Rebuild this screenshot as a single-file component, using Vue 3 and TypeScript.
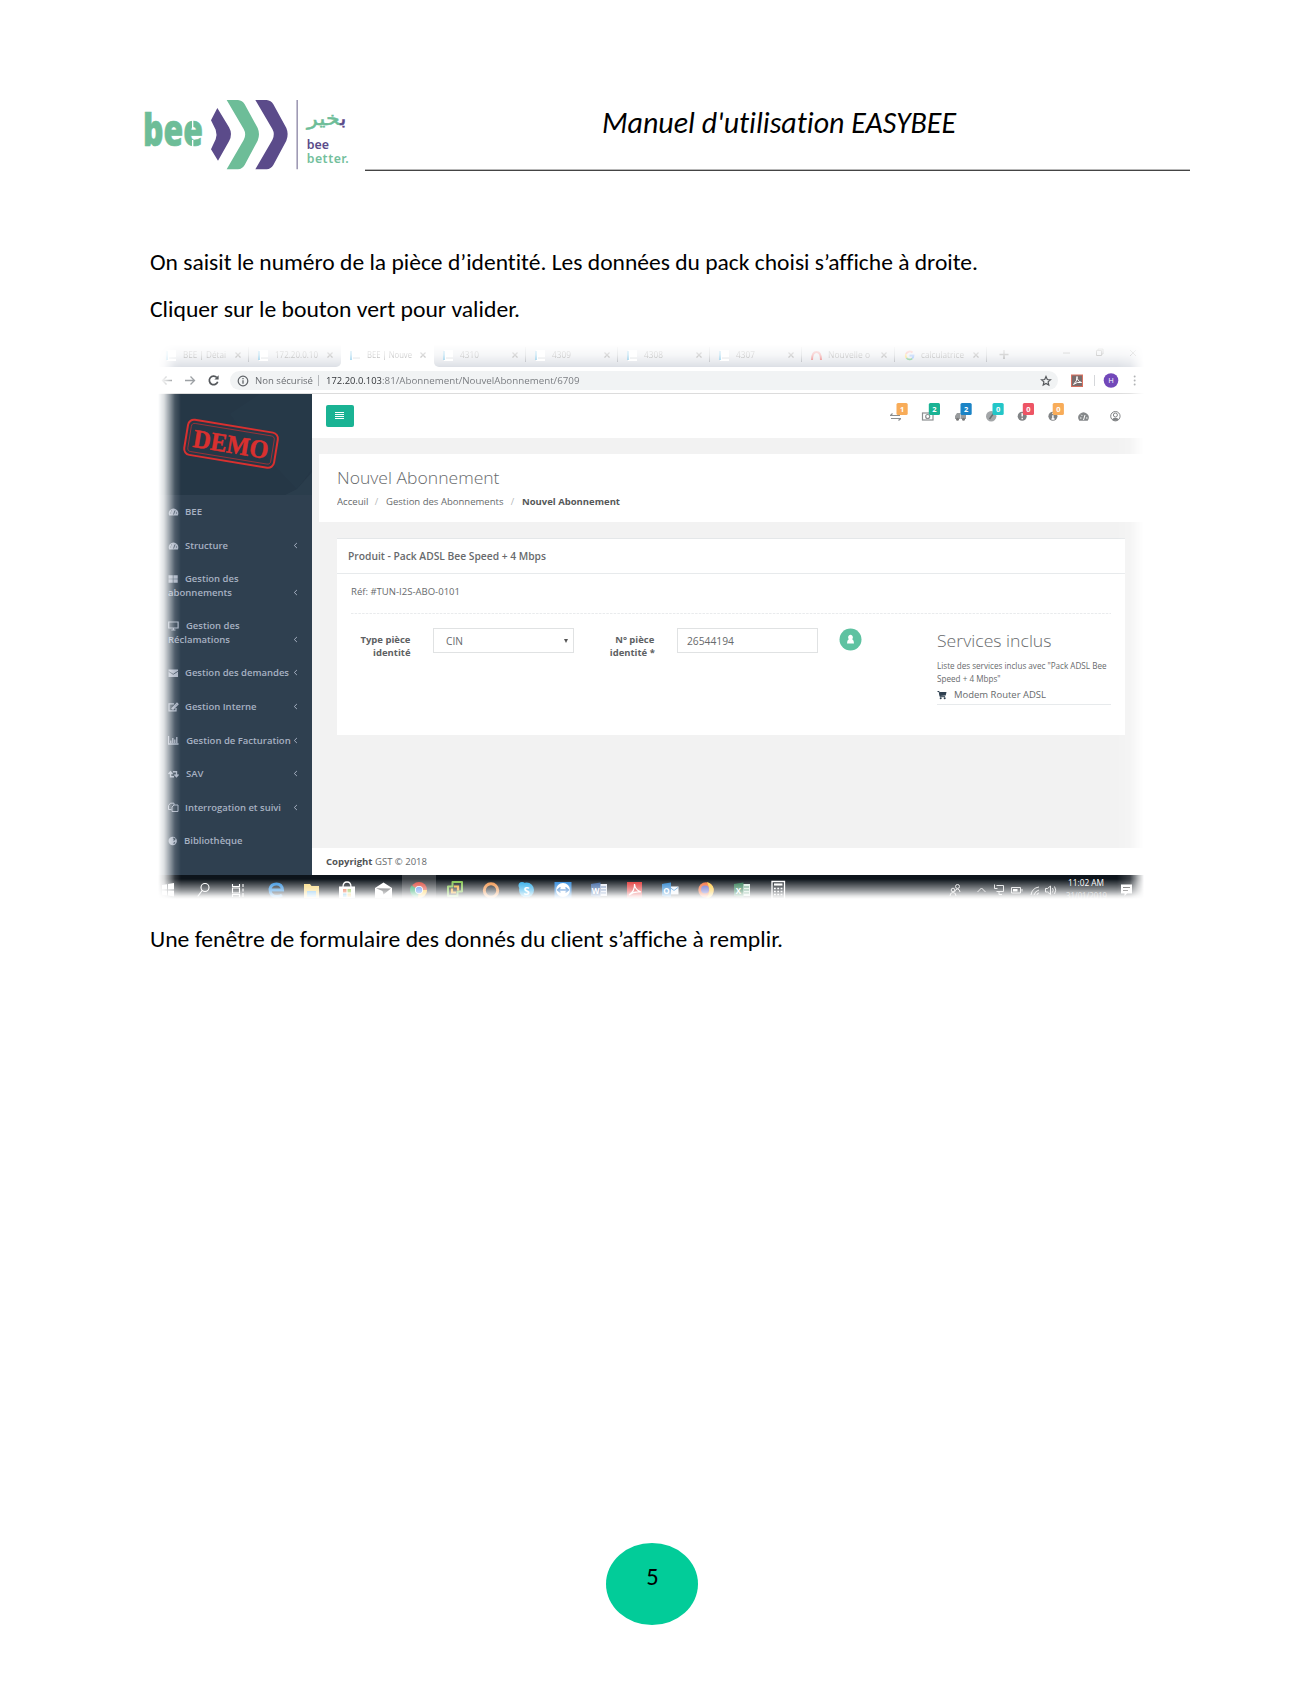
<script setup lang="ts">
import type { Directive } from 'vue'

interface MenuItem {
  icon: string
  lines: string[]
  widths: number[]
  indent: number
  arrow: boolean
}
interface Tab {
  kind: string
  label: string
  width: number
  active?: boolean
  line?: boolean
}

// Stretches a line of text horizontally to a given width.
const vFit: Directive<HTMLElement, number> = {
  mounted(el, binding) {
    const w = el.offsetWidth
    if (w > 0) el.style.transform = `scaleX(${binding.value / el.getBoundingClientRect().width})`
  },
}

const tabs: Tab[] = [
  { kind: 'doc', label: 'BEE | Détai', width: 43, line: true },
  { kind: 'doc', label: '172.20.0.10', width: 43 },
  { kind: 'doc', label: 'BEE | Nouve', width: 45, active: true },
  { kind: 'doc', label: '4310', width: 19, line: true },
  { kind: 'doc', label: '4309', width: 19, line: true },
  { kind: 'doc', label: '4308', width: 19, line: true },
  { kind: 'doc', label: '4307', width: 19, line: true },
  { kind: 'arc', label: 'Nouvelle o', width: 42, line: true },
  { kind: 'google', label: 'calculatrice', width: 43, line: true },
]

const menu: MenuItem[] = [
  { icon: 'gauge', lines: ['BEE'], widths: [17], indent: 17, arrow: false },
  { icon: 'gauge', lines: ['Structure'], widths: [43], indent: 17, arrow: true },
  { icon: 'grid', lines: ['Gestion des', 'abonnements'], widths: [53.5, 64], indent: 16.5, arrow: true },
  { icon: 'screen', lines: ['Gestion des', 'Réclamations'], widths: [53.5, 62], indent: 17.5, arrow: true },
  { icon: 'mail', lines: ['Gestion des demandes'], widths: [104], indent: 17, arrow: true },
  { icon: 'edit', lines: ['Gestion Interne'], widths: [71.5], indent: 17, arrow: true },
  { icon: 'chart', lines: ['Gestion de Facturation'], widths: [104.5], indent: 18, arrow: true },
  { icon: 'retweet', lines: ['SAV'], widths: [17.5], indent: 17.5, arrow: true },
  { icon: 'copy', lines: ['Interrogation et suivi'], widths: [96], indent: 17, arrow: true },
  { icon: 'globe', lines: ['Bibliothèque'], widths: [58.5], indent: 15.5, arrow: false },
]

const badges = [
  { x: 896.5, n: '1', color: '#f8ac59' },
  { x: 928.8, n: '2', color: '#1ab394' },
  { x: 960.5, n: '2', color: '#1c84c6' },
  { x: 992.5, n: '0', color: '#23c6c8' },
  { x: 1022.8, n: '0', color: '#ed5565' },
  { x: 1052.7, n: '0', color: '#f8ac59' },
]
</script>

<template>
  <div class="page">
    <header class="head">
      <svg class="logo" width="235" height="90" viewBox="0 0 705 270">
        <text x="39" y="168" class="bee" textLength="180" lengthAdjust="spacingAndGlyphs">bee</text>
        <path d="M188 86v28M188 150v28" stroke="#fff" stroke-width="4" />
        <path fill="#5b4b8a" d="M262 54L297 112Q309 133 297 154L264 212L243 178L257 148Q262 134 257 119L243 91Z" />
        <path fill="#6dbd98" d="M290 30H324Q337 31 344 43L383 114Q391 133 383 152L344 225Q337 237 324 238H290L341 150Q350 133 341 117Z" />
        <path fill="#5b4b8a" transform="translate(86 0)" d="M290 30H324Q337 31 344 43L383 114Q391 133 383 152L344 225Q337 237 324 238H290L341 150Q350 133 341 117Z" />
        <path d="M501.500 30V238" stroke="#8c86a5" stroke-width="4" />
        <text x="649" y="104" class="ar" textLength="118" lengthAdjust="spacingAndGlyphs" direction="rtl"><tspan fill="#5b4b8a" stroke="#5b4b8a">ب</tspan><tspan>خير</tspan></text>
        <text x="530" y="177" class="tag" fill="#5b4b8a" textLength="67" lengthAdjust="spacingAndGlyphs">bee</text>
        <text x="530" y="218" class="tag" fill="#74bf9d" textLength="126" lengthAdjust="spacing">better.</text>
      </svg>
      <div class="title"><span v-fit="354" class="fit">Manuel d'utilisation EASYBEE</span></div>
    </header>

    <p class="para first"><span v-fit="828" class="fit">On saisit le numéro de la pièce d’identité. Les données du pack choisi s’affiche à droite.</span></p>
    <p class="para second"><span v-fit="370" class="fit">Cliquer sur le bouton vert pour valider.</span></p>

    <section class="shot">
      <div class="tabs">
        <div v-for="(t, i) in tabs" :key="i" class="tab" :class="{ active: t.active, line: t.line }">
          <svg width="11" height="11" viewBox="0 0 11 11">
            <g v-if="t.kind === 'doc'"><path d="M1 0h9v11H1z" fill="#fff" /><path d="M1 1v9" stroke="#2b9fd8" stroke-width="1.600" /><path d="M3 8h7" stroke="#b5bcc4" /></g>
            <path v-else-if="t.kind === 'arc'" d="M1 10Q1 2 5.500 2T10 10" fill="none" stroke="#d33" stroke-width="2" />
            <g v-else fill="none" stroke-width="1.800"><path d="M8.500 2.500A4 4 0 0 0 2 4" stroke="#ea4335" /><path d="M2 4A4 4 0 0 0 2.500 8" stroke="#fbbc05" /><path d="M2.500 8A4 4 0 0 0 8.300 8.300" stroke="#34a853" /><path d="M8.300 8.300A4 4 0 0 0 9.500 5.500H5.500" stroke="#4285f4" /></g>
          </svg>
          <span class="tlabel"><span v-fit="t.width" class="fit">{{ t.label }}</span></span>
          <svg width="6" height="6" viewBox="0 0 6 6"><path d="M.5.5l5 5M5.500.5l-5 5" stroke="#555" stroke-width="1.200" /></svg>
        </div>
        <svg class="wins" width="150" height="20" viewBox="0 0 150 20" fill="none" stroke="#444">
          <path d="M12.500 10.500h9M17 6v9" stroke-width="1.300" /><path d="M76 9h7" /><path d="M109.500 6.500h5v5h-5zM111 6V5h5v5h-1" /><path d="M143 6l6 6M149 6l-6 6" />
        </svg>
      </div>

      <div class="toolbar">
        <svg width="75" height="26" viewBox="0 0 75 26" fill="none">
          <path d="M17 13.500H7.500M11.500 9.500l-4 4 4 4" stroke="#777b7f" stroke-width="1.400" />
          <path d="M30 13.500h9.500M35.500 9.500l4 4-4 4" stroke="#9da1a5" stroke-width="1.300" />
          <path d="M61.800 10.500A4.300 4.300 0 1 0 62.700 14.800" stroke="#55585c" stroke-width="1.700" /><path d="M63.600 8.200v4.200h-4.200z" fill="#55585c" />
        </svg>
        <div class="url">
          <svg width="12" height="12" viewBox="0 0 12 12"><circle cx="6" cy="6" r="4.800" fill="none" stroke="#5f6368" stroke-width="1.200" /><path d="M6 5.300v3.400M6 3v1.300" stroke="#5f6368" stroke-width="1.300" /></svg>
          <span class="sec"><span v-fit="58" class="fit">Non sécurisé</span></span>
          <i class="bar"></i>
          <span class="host"><span v-fit="56" class="fit">172.20.0.103</span></span>
          <span class="path"><span v-fit="197.500" class="fit">:81/Abonnement/NouvelAbonnement/6709</span></span>
          <svg class="star" width="12" height="12" viewBox="0 0 12 12"><path d="M6 1.500l1.300 3 3.200.3-2.400 2.100.7 3.200L6 8.400l-2.800 1.700.7-3.200L1.500 4.800l3.200-.3z" fill="none" stroke="#55585c" stroke-width="1.200" /></svg>
        </div>
        <svg width="87" height="26" viewBox="0 0 87 26">
          <rect x="13.500" y="8" width="11" height="11.500" fill="#7a6d6d" stroke="#d9705f" />
          <path d="M15.500 17.500Q19.500 14 19 9.500Q19 14 23.500 15.500Q19 14.500 15.500 17.500" fill="none" stroke="#fff" />
          <path d="M36.500 8v11" stroke="#d5d7da" /><circle cx="53" cy="13.500" r="7.300" fill="#7248b9" />
          <text x="53" y="16.300" text-anchor="middle" font-size="7.500" fill="#fff">H</text>
          <g fill="#6a6d71"><circle cx="76.700" cy="9.500" r="1" /><circle cx="76.700" cy="13.500" r="1" /><circle cx="76.700" cy="17.500" r="1" /></g>
        </svg>
      </div>

      <div class="body">
        <aside class="side">
          <div class="brand">
            <svg width="157" height="101" viewBox="0 0 157 101">
              <path d="M75 20L105 0H157V75L142 95L90 40Z" fill="#2b3f4e" opacity=".3" />
              <path d="M142 95L157 78V101H130Z" fill="#2f4351" opacity=".5" />
              <g transform="rotate(9.300 76 50)">
                <rect x="30.500" y="32" width="91" height="35.500" rx="6" fill="none" stroke="#d9302f" stroke-width="2" />
                <rect x="34" y="35.500" width="84" height="28.500" rx="3.500" fill="none" stroke="#d9302f" stroke-width=".6" />
                <text x="76" y="59" class="demo" text-anchor="middle" textLength="76" lengthAdjust="spacingAndGlyphs">DEMO</text>
              </g>
            </svg>
          </div>
          <ul class="menu">
            <li v-for="(m, i) in menu" :key="i">
              <div v-for="(l, j) in m.lines" :key="j" class="mline">
                <svg v-if="j === 0" class="mi" width="11" height="10" viewBox="0 0 11 10" :style="{ marginRight: m.indent - 11 + 'px' }">
                  <g v-if="m.icon === 'gauge'"><path d="M1.200 8.500A4.800 4.800 0 1 1 9.800 8.500Z" fill="#a7b1c2" /><path d="M5.500 7.500L7 3.500M2.200 6h1M3.200 3.600l.8.800M8 6h1" stroke="#2f4050" stroke-width=".9" /></g>
                  <path v-else-if="m.icon === 'grid'" d="M.5 1.200h4.300v3.500h-4.300zM5.400 1.200h4.300v3.500h-4.300zM.5 5.300h4.300v3.500h-4.300zM5.400 5.300h4.300v3.500h-4.300z" fill="#a7b1c2" />
                  <path v-else-if="m.icon === 'screen'" d="M.7 1h9.400v6H.7zM3.300 9h4.200M5.400 7v2" fill="none" stroke="#a7b1c2" stroke-width="1.200" />
                  <g v-else-if="m.icon === 'mail'"><path d="M.5 1.500h9.500v7.500H.5z" fill="#a7b1c2" /><path d="M.5 3.300l4.700 3 4.700-3" fill="none" stroke="#2f4050" stroke-width=".9" /></g>
                  <path v-else-if="m.icon === 'edit'" d="M6 1.800H1v7h7V6M4 6.500l5-5.300 1 1-5 5z" fill="none" stroke="#a7b1c2" stroke-width="1.200" />
                  <path v-else-if="m.icon === 'chart'" d="M.5 1v8h10M2.800 8V5.500M4.800 8V3M6.800 8V4.500M8.800 8V2" fill="none" stroke="#a7b1c2" stroke-width="1.300" />
                  <path v-else-if="m.icon === 'retweet'" d="M6 7.700H2.500V4M.5 5l2-2.300 2 2.300M5 2.700h3.500V6.500M6.500 5.500l2 2.300 2-2.300" fill="none" stroke="#a7b1c2" stroke-width="1.400" />
                  <path v-else-if="m.icon === 'copy'" d="M3.500 7.500h-3v-4l2-2.300H6V3M4 5l2-2h4v6.500H4z" fill="none" stroke="#a7b1c2" />
                  <g v-else><circle cx="4.700" cy="5" r="4.200" fill="#a7b1c2" /><path d="M5 2l2 1-1.500 1.500M5.500 7.500l1.500-1" fill="none" stroke="#2f4050" stroke-width="1.200" /></g>
                </svg>
                <span v-fit="m.widths[j]" class="fit">{{ l }}</span>
                <svg v-if="m.arrow && j === m.lines.length - 1" class="arrow" width="5" height="7" viewBox="0 0 5 7"><path d="M3.900 1L1.300 3.500 3.900 6" fill="none" stroke="#a7b1c2" /></svg>
              </div>
            </li>
          </ul>
        </aside>

        <main class="main">
          <div class="topbar">
            <div class="burger"><i></i><i></i><i></i><i></i></div>
            <svg width="245" height="44" viewBox="885 394 245 44">
              <g fill="none" stroke="#8c8f91" stroke-width="1.200">
                <path d="M890 415.500h10M891 418.500h10M892.500 413.500l-2 2M898.500 420.500l2.300-2" />
                <rect x="922.500" y="413" width="10.500" height="7" /><circle cx="927.700" cy="416.500" r="2" />
              </g>
              <path d="M961 411.500h5v7.500h-5zM955 416l2-3h3.500v6H955z" fill="#999c9e" />
              <circle cx="957.500" cy="419.300" r="1.500" fill="#777" /><circle cx="963.500" cy="419.300" r="1.500" fill="#777" />
              <circle cx="991.200" cy="416.200" r="5.200" fill="#a3a6a8" /><path d="M993.500 413.500l-4 5.500" stroke="#6c6f70" stroke-width="1.500" />
              <circle cx="1022.200" cy="416.200" r="4.500" fill="#808385" /><path d="M1022.200 413v3.500M1022.200 417.800v1.400" stroke="#fff" stroke-width="1.400" />
              <circle cx="1052.900" cy="416.200" r="4.500" fill="#808385" /><path d="M1052.900 415.300v4M1051.500 419h3M1052.900 412.800v1.300" stroke="#fff" stroke-width="1.400" />
              <path d="M1079.300 420.700A5.200 5.200 0 1 1 1087.700 420.700Z" fill="#85888a" /><path d="M1083.500 420L1085 415M1080 418h1.500M1081.200 414.800l1 1M1086 418h1.500" stroke="#fff" />
              <circle cx="1115.400" cy="416.200" r="4.700" fill="none" stroke="#808385" /><circle cx="1115.400" cy="415" r="2" fill="none" stroke="#808385" /><path d="M1112 419.500Q1113 417.500 1115.400 417.700T1119 419.500L1117 420.800H1113.500Z" fill="#808385" />
              <g v-for="(b, i) in badges" :key="i">
                <rect :x="b.x" y="403" width="11.200" height="12" rx="1.500" :fill="b.color" />
                <text :x="b.x + 5.600" y="411.800" text-anchor="middle" class="num">{{ b.n }}</text>
              </g>
            </svg>
          </div>

          <div class="heading">
            <h2><span v-fit="162.500" class="fit">Nouvel Abonnement</span></h2>
            <div class="crumbs">
              <span class="c1"><span v-fit="31.500" class="fit">Acceuil</span></span><span class="c2">/</span>
              <span class="c3"><span v-fit="117.500" class="fit">Gestion des Abonnements</span></span><span class="c2">/</span>
              <b><span v-fit="98" class="fit">Nouvel Abonnement</span></b>
            </div>
          </div>

          <div class="ibox">
            <div class="ititle"><span v-fit="198" class="fit">Produit - Pack ADSL Bee Speed + 4 Mbps</span></div>
            <div class="icontent">
              <div class="ref"><span v-fit="109" class="fit">Réf: #TUN-I2S-ABO-0101</span></div>
              <svg class="dash" width="760" height="1"><path d="M0 .5H760" stroke="#e9ebed" stroke-dasharray="2.500 1.200" /></svg>
              <div class="form">
                <label class="l1"><span v-fit="50" class="fit r">Type pièce</span><span v-fit="37.500" class="fit r">identité</span></label>
                <div class="field sel"><span v-fit="17" class="fit">CIN</span><i></i></div>
                <label class="l2"><span v-fit="39" class="fit r">N° pièce</span><span v-fit="45" class="fit r">identité *</span></label>
                <div class="field inp"><span v-fit="47" class="fit">26544194</span></div>
                <svg class="user" width="23" height="23" viewBox="0 0 23 23"><circle cx="11.500" cy="11.500" r="11" fill="#5ec2a1" /><path d="M11.500 6.800a2.300 2.700 0 0 1 1.800 4.500Q15 12 15 15.500H8Q8 12 9.700 11.300A2.300 2.700 0 0 1 11.500 6.800" fill="#fff" /></svg>
                <div class="services">
                  <h2><span v-fit="114.500" class="fit">Services inclus</span></h2>
                  <small><span v-fit="169.500" class="fit">Liste des services inclus avec "Pack ADSL Bee</span></small>
                  <small><span v-fit="63.500" class="fit">Speed + 4 Mbps"</span></small>
                  <div class="srv">
                    <svg width="10" height="10" viewBox="0 0 10 10"><path d="M.5 1.500h1.600l1 5.200h5" fill="none" stroke="#2f4050" /><path d="M2.500 2h7L8.700 5.500 3 6z" fill="#2f4050" /><circle cx="3.700" cy="8.300" r="1" fill="#2f4050" /><circle cx="7.700" cy="8.300" r="1" fill="#2f4050" /></svg>
                    <span v-fit="92" class="fit">Modem Router ADSL</span>
                  </div>
                </div>
              </div>
            </div>
          </div>

          <footer class="foot"><b><span v-fit="46.500" class="fit">Copyright</span></b><span v-fit="52" class="fit">GST © 2018</span></footer>
        </main>
      </div>

      <svg class="taskbar" width="990" height="27" viewBox="155 875 990 27">
        <rect x="155" y="875" width="990" height="27" fill="#0d141b" />
        <rect x="402" y="875" width="34" height="27" fill="#3a3f44" />
        <path d="M162 885l5-.8v5.300h-5zM168 884l6-1v6.500h-6zM162 890.500h5v5l-5-.8zM168 890.500h6v6l-6-1z" fill="#fff" />
        <g fill="none" stroke="#fff" stroke-width="1.100">
          <circle cx="205" cy="887.500" r="4" /><path d="M202.200 890.500l-4.500 6" />
          <path d="M232.500 884v2.500h7V884M232.500 897v-2.500h7v2.500M232.500 888h7v5h-7zM243 884v3M243 888.500v3M243 893v4" />
        </g>
        <path d="M270.500 890h12Q282 884 276.500 884T270 889Q270 896.500 277 896.500Q280 896.500 282 895" fill="none" stroke="#2589dd" stroke-width="3" />
        <path d="M304 884h6l1.500 2H319v12h-15z" fill="#f8d775" /><path d="M307 891h9v6h-9z" fill="#6db8e8" />
        <path d="M339 886.500h16V898h-16z" fill="#fff" /><path d="M343 887q0-5 4-5t4 5" fill="none" stroke="#fff" stroke-width="1.300" />
        <path d="M343 889h3.500v3.500H343z" fill="#e65328" /><path d="M347.500 889h3.500v3.500h-3.500z" fill="#7db928" /><path d="M343 893.500h3.500v3.500H343z" fill="#1b9ad7" /><path d="M347.500 893.500h3.500v3.500h-3.500z" fill="#fbb714" />
        <path d="M375 888l8.500-5.500 8.500 5.500v10h-17z" fill="#fff" /><path d="M376 888.300l15 .2-7.500 6-1-3.500z" fill="#4a4d50" />
        <circle cx="419" cy="890" r="8" fill="#dc4437" /><path d="M419 890l-7.500-4.500A8 8 0 0 0 418 898z" fill="#1da362" /><path d="M419 890h8a8 8 0 0 1-9 8z" fill="#ffcd40" /><circle cx="419" cy="890" r="4" fill="#fff" /><circle cx="419" cy="890" r="3.200" fill="#4a86ee" />
        <path d="M452.500 882H462v9.500h-4.500v4.500H448v-9.500h4.500z" fill="none" stroke="#79c142" stroke-width="2" stroke-linejoin="round" /><path d="M454 886.500h4v4M456 892.500h-4v-4" fill="none" stroke="#f5a623" stroke-width="2.200" />
        <circle cx="491" cy="890.500" r="6.700" fill="none" stroke="#ef8b3c" stroke-width="3" />
        <circle cx="526.500" cy="890" r="7.500" fill="#1fa7e8" /><circle cx="522" cy="885.500" r="3.500" fill="#1fa7e8" />
        <text x="526.500" y="894.500" text-anchor="middle" class="ti">S</text>
        <rect x="554.500" y="882" width="17" height="17" fill="#1e7fd8" /><circle cx="563" cy="890" r="7" fill="#fff" /><path d="M557.500 890h11M560.500 887.500l-3 2.500 3 2.500M565.500 887.500l3 2.500-3 2.500" stroke="#1e6fc8" stroke-width="1.500" fill="none" />
        <path d="M600 884h7v12h-7z" fill="#e6ebf4" /><path d="M601 887h5M601 890h5M601 893h5" stroke="#365f9e" /><path d="M591 884l9.500-1.500v15L591 896z" fill="#2b579a" /><text x="595.500" y="893.500" text-anchor="middle" class="ts">W</text>
        <rect x="627" y="882" width="15" height="16" fill="#e02b2b" /><path d="M629 895Q635 891 634.500 884Q635 890 641 892Q634 891 629 895" fill="none" stroke="#fff" stroke-width="1.200" />
        <path d="M669 886.500h9.500v8H669z" fill="#eef4fb" /><path d="M670 887.500l4 3 4-3" fill="none" stroke="#1979ca" /><path d="M662 884l9-1.500v15l-9-1.500z" fill="#1979ca" /><text x="666.500" y="893.500" text-anchor="middle" class="ts">O</text>
        <circle cx="706" cy="890" r="7.700" fill="#f4622d" /><path d="M707 882q8 3 6.500 10T706 898q6-6 1-16" fill="#ffcb2e" /><circle cx="705" cy="889.500" r="4" fill="#5b5fc7" />
        <path d="M743 884h7v12h-7z" fill="#d8ebe0" /><path d="M744 887h5M744 890h5M744 893h5" stroke="#217346" /><path d="M734 884l9.500-1.500v15L734 896z" fill="#1e7145" /><text x="738.500" y="893.500" text-anchor="middle" class="ts">X</text>
        <path d="M772 881.500h12.500V899H772z" fill="none" stroke="#fff" stroke-width="1.300" /><path d="M774 884.500h8.500" stroke="#fff" stroke-width="2.200" /><path d="M774 888.500h8.500M774 891.500h8.500M774 894.500h8.500" stroke="#fff" stroke-width="1.700" stroke-dasharray="1.800 1.500" />
        <g fill="none" stroke="#fff" stroke-width="1" opacity=".85">
          <circle cx="957.500" cy="886.500" r="2" /><path d="M954.500 892q1-3 3-3t2.500 3" /><circle cx="953" cy="890" r="1.800" /><path d="M950 896q0-3.500 3-3.500t3 3.500" />
          <path d="M977.500 892l4-4 4 4" /><path d="M996.500 885.500h7v6h-7M999 891.500v3h3M994.500 884.500v4h3" /><path d="M1011.500 887.500h9v5.500h-9zM1022 889v2.500" />
          <path d="M1031 895q1-7 8-8M1034 895q1-4 5-5M1037 895q0-2 2-2" /><path d="M1045.500 888.500h2l3-2.500v8.500l-3-2.500h-2zM1052.500 888q1.500 2 0 4.500M1054.500 886.500q2.500 3.500 0 7.500" />
        </g>
        <path d="M1013 889h4.500v2.500h-4.500z" fill="#fff" />
        <text x="1068" y="886" class="clock" textLength="36" lengthAdjust="spacingAndGlyphs">11:02 AM</text>
        <text x="1066" y="899" class="clock" opacity=".6" textLength="41" lengthAdjust="spacingAndGlyphs">31/01/2019</text>
        <path d="M1121 884.500h11v9h-5l-2.500 2.500v-2.500H1121z" fill="#fff" /><path d="M1123 887.500h7M1123 890.500h5" stroke="#222" />
      </svg>
    </section>

    <p class="para third"><span v-fit="633" class="fit">Une fenêtre de formulaire des donnés du client s’affiche à remplir.</span></p>

    <div class="pageno">5</div>
  </div>
</template>

<style>
body { margin: 0; background: #fff; }
</style>

<style scoped>
.page { box-sizing: border-box; width: 1301px; height: 1684px; padding-top: 90px; overflow: hidden; background: #fff; color: #000; display: flex; flex-direction: column; font-family: "Open Sans", "Noto Sans", sans-serif; }
.page svg { flex: none; display: block; }
.fit { display: inline-block; transform-origin: left center; white-space: nowrap; }
.fit.r { transform-origin: right center; }
.head { display: flex; height: 90px; flex: none; padding-left: 130px; }
.bee { font: 800 134px "Open Sans", sans-serif; fill: #6dbd98; stroke: #6dbd98; stroke-width: 2; }
.ar { font: 56px "DejaVu Sans", sans-serif; fill: #6dbd98; stroke: #6dbd98; stroke-width: 1.500; }
.tag { font: 600 37px "Noto Sans", sans-serif; }
.title { box-sizing: border-box; width: 825px; height: 81px; padding-left: 237px; border-bottom: 1px solid #444; box-shadow: inset 0 -1px #b8b8b8; font-family: Carlito, Lato, sans-serif; font-size: 29.700px; font-style: italic; line-height: 66px; font-variant-ligatures: none; }
.para { margin: 0; padding-left: 150px; height: 30px; line-height: 30px; font-family: Carlito, Lato, sans-serif; font-size: 23.400px; font-variant-ligatures: none; flex: none; }
.first { margin-top: 67px; }
.second { margin-top: 17px; }
.third { margin-top: 22px; }
.pageno { margin: 589px 0 0 606px; width: 92px; height: 82px; box-sizing: border-box; padding-left: 1px; border-radius: 50%; background: #02cc99; text-align: center; font-family: Carlito, Lato, sans-serif; font-size: 24.500px; line-height: 68px; flex: none; }

.shot { margin: 16px 0 0 155px; width: 990px; height: 562px; flex: none; overflow: hidden; display: flex; flex-direction: column; color: #676a6c; font-size: 9.400px;
  mask-image: linear-gradient(to right, transparent 3px, rgba(0,0,0,.16) 9px, rgba(0,0,0,.52) 15px, rgba(0,0,0,.85) 20px, #000 26px, #000 962px, rgba(0,0,0,.8) 975px, rgba(0,0,0,.3) 983px, transparent 989px), linear-gradient(to bottom, transparent 4px, rgba(0,0,0,.22) 15px, rgba(0,0,0,.55) 22px, #000 30px, #000 539px, rgba(0,0,0,.47) 550px, rgba(0,0,0,.1) 556px, transparent 559px);
  mask-composite: intersect; }
.tabs { display: flex; flex: none; height: 27px; box-sizing: border-box; padding-left: 2px; background: linear-gradient(to right, #d5d9e0 178px, #fff 178px, #fff 286px, #d5d9e0 286px); }
.tab { position: relative; box-sizing: border-box; width: 92.200px; height: 27px; padding: 3px 8px 0 9px; display: flex; align-items: center; color: #555; background: #d5d9e0; }
.tab:nth-child(2) { border-bottom-right-radius: 5px; }
.tab:nth-child(4) { border-bottom-left-radius: 5px; }
.tab.active { background: #fff; }
.tab.line::after { content: ""; position: absolute; right: 0; top: 7px; height: 15px; width: 1px; background: #969ba2; }
.tlabel { flex: 1; margin-left: 6px; overflow: hidden; line-height: 14px; }
.wins { margin-top: 4px; }
.toolbar { display: flex; flex: none; height: 26px; background: #fff; border-bottom: 1px solid #dcdcdc; }
.url { box-sizing: border-box; width: 828px; height: 19px; margin-top: 4px; border-radius: 10px; background: #f1f3f4; display: flex; align-items: center; padding-left: 6.500px; line-height: 19px; font-size: 9.700px; color: #6b6e72; }
.sec { margin-left: 6px; width: 63px; }
.bar { width: 1px; height: 11px; background: #b5b8bb; }
.host { margin-left: 7.500px; width: 56px; color: #33363a; }
.path { color: #7b7e82; }
.star { margin-left: auto; margin-right: 6.500px; }

.body { display: flex; height: 481px; flex: none; }
.side { width: 156.700px; flex: none; background: #2f4050; color: #a7b1c2; font-weight: 600; }
.brand { height: 101.200px; background: #253746; overflow: hidden; }
.demo { font: bold 26px "Liberation Serif", serif; fill: #d9302f; stroke: #d9302f; stroke-width: .5; }
.menu { list-style: none; margin: 0; padding: 0; }
.menu li { padding: 10.100px 0 10.100px 13.200px; }
.mline { display: flex; align-items: center; height: 13.400px; line-height: 13.400px; position: relative; font-size: 9.500px; }
.arrow { position: absolute; right: 14px; top: 3px; }
.main { flex: 1; background: #f2f2f2; display: flex; flex-direction: column; min-width: 0; }
.topbar { height: 44px; flex: none; background: #fff; display: flex; justify-content: space-between; padding: 0 15px 0 14px; }
.burger { margin-top: 10.500px; width: 28px; height: 22px; border-radius: 2px; background: #1ab394; display: flex; flex-direction: column; align-items: center; justify-content: center; gap: 1px; }
.burger i { width: 9px; height: 1.200px; background: #fff; }
.num { font: bold 7.500px "Open Sans", sans-serif; fill: #fff; }
.heading { margin: 16px 0 0 7px; height: 68px; flex: none; background: #fff; box-sizing: border-box; padding: 12px 0 0 18px; }
h2 { margin: 0; font-size: 17px; font-weight: 300; height: 24px; line-height: 24px; }
.crumbs { display: flex; margin-top: 5px; line-height: 14px; height: 14px; }
.c1 { width: 38px; }
.c2 { width: 11px; color: #b5b8ba; }
.c3 { width: 125px; }
.crumbs b { color: #555859; margin-left: 0; }
.ibox { margin: 16px 0 0 25px; width: 788px; height: 197px; flex: none; box-sizing: border-box; background: #fff; border-top: 1px solid #e4e7e9; }
.ititle { box-sizing: border-box; height: 35px; padding: 9px 0 0 11px; line-height: 16px; font-size: 10px; font-weight: 600; border-bottom: 1px solid #e7eaec; }
.icontent { padding-left: 14px; }
.ref { height: 39px; line-height: 36px; padding-left: .5px; }
.form { display: flex; height: 100px; padding-top: 14px; }
.form label { display: flex; flex-direction: column; align-items: flex-end; font-weight: 700; font-size: 9px; line-height: 13.400px; padding-top: 5px; color: #5e6163; }
.l1 { width: 60px; }
.l2 { width: 81px; }
.field { box-sizing: border-box; width: 141px; height: 25px; border: 1px solid #e0e2e3; line-height: 24px; font-size: 10px; display: flex; align-items: center; justify-content: space-between; padding-right: 5px; }
.sel { margin-left: 22px; padding-left: 12px; }
.sel i { border: 2.500px solid transparent; border-top: 4px solid #555; border-bottom: 0; }
.inp { margin-left: 22px; padding-left: 9px; }
.user { margin-left: 21.500px; margin-top: -.5px; }
.services { margin-left: 75px; width: 174px; }
.services h2 { padding-top: 1px; }
small { display: block; font-size: 8.300px; height: 13.400px; line-height: 13.400px; }
.services h2 + small { margin-top: 5.500px; }
.srv { display: flex; align-items: center; height: 18px; line-height: 16px; margin-top: .5px; font-size: 9.800px; border-bottom: 1px solid #e7eaec; gap: 7px; }
.foot { margin-top: auto; height: 27.300px; background: #fff; padding-left: 14px; display: flex; line-height: 28px; }
.foot b { width: 49px; color: #505355; }
.ti { font: bold 11px "Open Sans", sans-serif; fill: #fff; }
.ts { font: bold 8px "Open Sans", sans-serif; fill: #fff; }
.clock { font: 8.500px "Open Sans", sans-serif; fill: #fff; }
</style>
